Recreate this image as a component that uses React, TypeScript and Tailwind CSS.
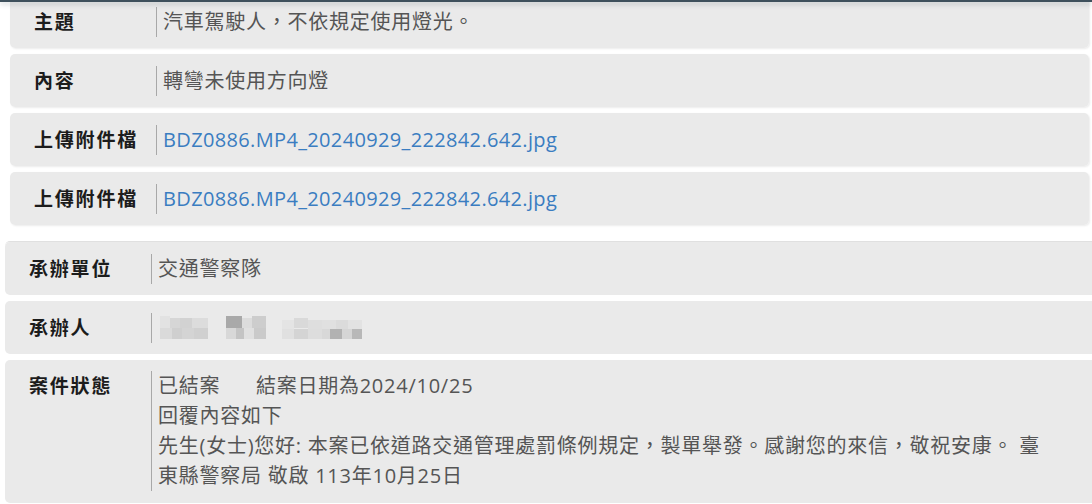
import React from "react";

const font = { fontFamily: '"Open Sans", "Noto Sans CJK TC", sans-serif' };

type Row = { label: string; value: React.ReactNode };

const upperRows: Row[] = [
  { label: "主題", value: <span className="text-[#555]">汽車駕駛人，不依規定使用燈光。</span> },
  { label: "內容", value: <span className="text-[#555]">轉彎未使用方向燈</span> },
  { label: "上傳附件檔", value: <a className="text-[#3a7dc1] tracking-[0.35px]">BDZ0886.MP4_20240929_222842.642.jpg</a> },
  { label: "上傳附件檔", value: <a className="text-[#3a7dc1] tracking-[0.35px]">BDZ0886.MP4_20240929_222842.642.jpg</a> },
];

// redacted name, drawn as a mosaic
function Mosaic() {
  const cells: [number, number, number, number, string][] = [
    [0, 0, 10, 12, "#e2e2e2"], [10, 2, 10, 10, "#d6d6d6"], [20, 2, 12, 10, "#d2d2d2"], [32, 2, 16, 10, "#dcdcdc"],
    [0, 12, 12, 11, "#dadada"], [12, 12, 10, 11, "#cfcfcf"], [22, 12, 12, 11, "#d4d4d4"], [34, 12, 14, 11, "#d0d0d0"],
    [66, 0, 16, 12, "#a9a9a9"], [82, 2, 10, 10, "#dcdcdc"], [92, 0, 14, 12, "#cdcdcd"],
    [66, 12, 10, 11, "#d8d8d8"], [76, 12, 8, 11, "#c4c4c4"], [84, 12, 10, 11, "#e0e0e0"], [94, 12, 12, 11, "#cacaca"],
    [122, 4, 12, 9, "#e4e4e4"], [134, 2, 14, 10, "#d9d9d9"], [148, 4, 14, 9, "#dedede"], [162, 4, 14, 9, "#e0e0e0"], [176, 4, 12, 9, "#dbdbdb"], [188, 4, 14, 9, "#e2e2e2"],
    [122, 13, 12, 10, "#e0e0e0"], [134, 13, 14, 10, "#d4d4d4"], [148, 13, 14, 10, "#dddddd"], [162, 13, 8, 10, "#d8d8d8"], [170, 13, 12, 10, "#b2b2b2"], [182, 13, 10, 10, "#d5d5d5"], [192, 13, 10, 10, "#b8b8b8"],
  ];
  return (
    <svg width="202" height="24" viewBox="0 0 202 24" className="block">
      {cells.map(([x, y, w, h, c], i) => (
        <rect key={i} x={x} y={y} width={w} height={h} fill={c} />
      ))}
    </svg>
  );
}

function Card({ label, children, tall }: { label: string; children: React.ReactNode; tall?: boolean }) {
  return (
    <div className={`flex rounded-[5px] bg-[#eaeaea] ${tall ? "items-start pt-[11px] pb-[12px]" : "h-[53px] items-center"}`}>
      <div className="w-[146px] shrink-0 pl-[24px] text-[19px] leading-[30px] font-bold tracking-[1.8px] text-[#1c1c1c]">{label}</div>
      <div className={`border-l border-[#a8a8a8] pl-[6px] text-[20px] leading-[30px] tracking-[0.75px] ${tall ? "" : "h-[30px]"}`}>{children}</div>
    </div>
  );
}

export default function App() {
  return (
    <div className="relative h-[504px] w-full overflow-hidden bg-white" style={font}>
      <div className="absolute left-0 right-0 top-0 z-10 h-[2px] bg-[#3e505c] shadow-[0_2px_5px_rgba(60,80,92,0.35)]" />

      <div className="ml-[10px] mr-[3px] mt-[-5px] flex flex-col gap-[6px]">
        {upperRows.map((r, i) => (
          <div key={i} className="shadow-[1px_1px_2px_rgba(0,0,0,0.08)] rounded-[5px]">
            <Card label={r.label}>{r.value}</Card>
          </div>
        ))}
      </div>

      <div className="ml-[5px] mr-[-10px] mt-[16px] flex flex-col gap-[6px]">
        <div className="rounded-[5px] border-t border-[#e0e0e0]">
          <Card label="承辦單位"><span className="text-[#555]">交通警察隊</span></Card>
        </div>
        <div className="rounded-[5px]">
          <Card label="承辦人">
            <div className="flex h-[30px] items-center pl-[2px]"><Mosaic /></div>
          </Card>
        </div>
        <Card label="案件狀態" tall>
          <div className="text-[#555]">
            <div>已結案{"\u00a0\u00a0\u00a0\u00a0\u00a0\u00a0"}結案日期為2024/10/25</div>
            <div>回覆內容如下</div>
            <div className="w-[895px]">先生(女士)您好: 本案已依道路交通管理處罰條例規定，製單舉發。感謝您的來信，敬祝安康。 臺東縣警察局 敬啟 113年10月25日</div>
          </div>
        </Card>
      </div>
    </div>
  );
}
